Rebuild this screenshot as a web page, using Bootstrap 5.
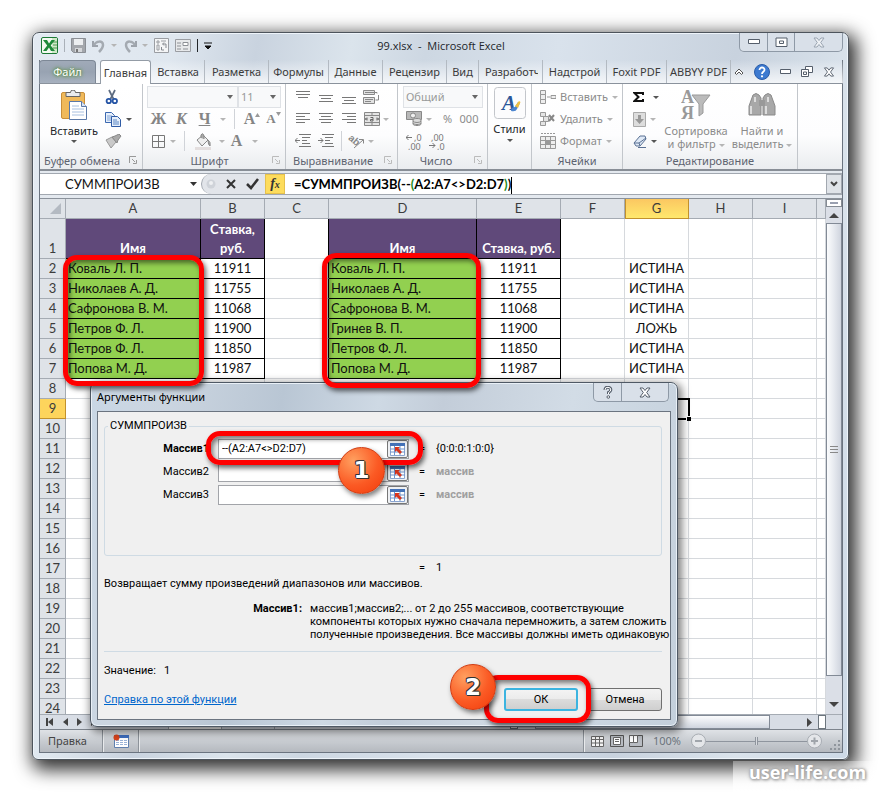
<!DOCTYPE html>
<html lang="ru">
<head>
<meta charset="utf-8">
<meta name="viewport" content="width=device-width, initial-scale=1">
<title>99.xlsx - Microsoft Excel</title>
<link href="https://cdn.jsdelivr.net/npm/bootstrap@5.3.0/dist/css/bootstrap.min.css" rel="stylesheet">
<style>
:root{--ui:"Noto Sans","Open Sans",sans-serif;--cell:Lato,"Open Sans",sans-serif;--dlg:Roboto,"Noto Sans",sans-serif}
body{font:11px/16px var(--ui);color:#3b3b3b;background:#fff;overflow:hidden}
button,select,input{font:inherit;color:inherit}
button{border:0;background:none;padding:0;white-space:nowrap}
svg{flex:none;display:block}
.stage{padding:32px 33px 0 32px}
.xl-window{border:1px solid #4d545c;border-radius:7px 7px 6px 6px;padding:0 5px 6px 6px;background:linear-gradient(100deg,#e3eaf2 0,#dfe7ef 15%,#c9d3df 24%,#dbe4ec 34%,#cdd7e2 42%,#d9e2ec 56%,#c8d2de 75%,#dae3ec 88%,#cdd9e6 100%);box-shadow:inset 0 0 0 1px #eef4fa,4px 6px 18px 4px rgba(0,0,0,.8)}
.client{border:1px solid #6b7480;border-top:0}
.titlebar{height:27px}
.app-title{font:12px/16px "Open Sans",sans-serif;font-size:11px}
.qat{gap:6px;padding:2px 0 0 2px}
.qat .hist{display:flex;align-items:center;gap:5px}
.vsep{width:1px;background:#a9b0b8;align-self:stretch;margin:2px 0}
.wbtns{height:19px;border:1px solid #8e99a6;border-top:0;border-radius:0 0 5px 5px;background:#d9e0e9}
.wbtns button{display:flex;align-items:center;justify-content:center;border-right:1px solid #8e99a6}
.wbtns button:last-child{border-right:0}
.tabs{height:24px;border-bottom:1px solid #8a929c;background:linear-gradient(rgba(255,255,255,0),rgba(255,255,255,.75));margin:0 -1px}
.tabs .rtab{height:23px;line-height:24px;overflow:hidden;text-align:center;border-right:1px solid #b3bac2;flex:none}
.tabs .t-file{background:linear-gradient(#a0aab8,#98a3b2 50%,#a7b1bf);border:1px solid #7d8896;border-bottom:0;border-radius:4px 4px 0 0;color:#fff;text-shadow:0 0 3px #48802a,0 0 4px #5c9a35;width:57px;line-height:22px}
.tabs .t-home{background:#fff;border:1px solid #949ca6;border-bottom:0;border-radius:3px 3px 0 0;height:24px;width:51px;line-height:22px;margin:0 1px 0 4px}
.tabs .corner{gap:10px;margin-right:8px}
.ribbon{height:87px;background:linear-gradient(#fff,#fdfdfe 60%,#eaecef);border-bottom:2px solid #888e96}
.grp{display:flex;flex-direction:column;border-right:1px solid #c2c6cb;flex:none}
.gbody{height:68px;padding-top:2px;display:flex}
.glabel{height:17px;line-height:17px;display:flex;align-items:center;color:#5d6370}
.r{height:22px;display:flex;align-items:center;color:#8b8b8b}
.r>*{flex:none}
.c{display:flex;align-items:center;justify-content:center}
.w8{width:8px}.w10{width:10px}.w16{width:16px}.w20{width:20px}.w23{width:23px}
.car{width:0;height:0;border:3px solid transparent;border-top-color:#b5b5b5;border-bottom:0;flex:none;display:block}
.car.dk{border-top-color:#555}
.gs{width:1px;height:20px;background:#d0d3d8}
.ser{font:bold 16px/20px "Liberation Serif",serif;color:#858585}
.rsel{appearance:none;height:22px;border:1px solid #dfe2e6;border-radius:0;background:#f8f9fa url("data:image/svg+xml,%3Csvg xmlns='http://www.w3.org/2000/svg' width='6' height='4'%3E%3Cpath d='M0 0h6L3 4z' fill='%23666'/%3E%3C/svg%3E") no-repeat right 4px center;padding:0 2px;color:#999}
.bigtxt{line-height:13px;padding-top:3px}
.fbar{height:27px;background:#e4e9ef;padding-top:2px}
.fin{height:22px;background:#fff;border:solid #a2a8b0;border-width:1px 0}
.namebox{width:145px;font:13px/20px var(--cell);color:#111;border:0;outline:0;background:#fff;padding:0 0 0 25px}
.nbtn{width:64px;background:#e2e5ea;border-radius:11px 0 0 11px;border-left:1px solid #a2a8b0;gap:10px;padding-left:4px}
.fx{width:20px;background:#fddc5c;border:1px solid #e6c14c;font:italic bold 14px/16px "Liberation Serif",serif;color:#333}
.formula{font:bold 13px/20px var(--cell);color:#000;padding-left:9px;white-space:nowrap;outline:0}
.formula .g{color:#1b8a1b}
.caret{display:inline-block;width:1px;height:17px;background:#000;vertical-align:middle}
.sheetwrap{border-top:1px solid #8b929b;height:516px}
.gridbox{flex:1;min-width:0;overflow:hidden;background:#fff}
.sheet{table-layout:fixed;border-collapse:separate;border-spacing:0;width:100%;font:13px/19px var(--cell);color:#111}
.sheet th,.sheet td{padding:0;height:20px;border-right:1px solid #d6d9dd;border-bottom:1px solid #d6d9dd;white-space:nowrap;overflow:hidden}
.sheet th{background:#dfe3e8;border-color:#a5abb3;font-weight:400;text-align:center;color:#3c3c3c}
.sheet thead th.on{background:linear-gradient(#fbc761,#ffe86d);border-color:#c2912c;box-shadow:inset 1px 0 #c2912c}
.sheet tbody th.on{background:#fdd45c;border-color:#c2912c}
.sheet tr.first td,.sheet tr.first th{height:40px;vertical-align:bottom}
.sheet td.hd{background:#60497a;color:#fff;font-weight:700;text-align:center;border-color:#000;white-space:normal}
.sheet td.nm{background:#92d050;border-color:#000;padding-left:2px}
.sheet td.nu{border-color:#000;text-align:center}
.sheet td.ce{text-align:center}
.sheet td.lb{border-right-color:#000}
.sheet td.cur{outline:2px solid #000;outline-offset:-1px;overflow:visible;position:relative}
.sheet td.cur::after{content:"";position:absolute;right:-3px;bottom:-3px;width:5px;height:5px;background:#000;border:solid #fff;border-width:1px 0 0 1px}
.vscroll{width:16px;background:#dbdfe7}
.split{height:8px;border:1px solid #858b93;background:#fff;padding:2px 3px}
.split i{display:block;height:2px;background:#9aa0b0}
.arr{height:16px}
.thumb{border:1px solid #828a96;background:linear-gradient(90deg,#fbfcfd,#e6e9ef 50%,#cfd4de);height:453px}
.vgap{height:20px}
.hrow{height:16px;background:#d8dde5;border-top:1px solid #a5abb3;border-bottom:1px solid #7d848d}
.hrow .st{width:53px;line-height:14px;color:#333;border-right:1px solid #9da3ab}
.hnav{width:60px;gap:9px;padding-left:6px}
.hthumb{width:235px;border:1px solid #828a96;background:linear-gradient(#fbfcfd,#e6e9ef 50%,#cfd4de)}
.status{height:22px;background:linear-gradient(#dfe2e6,#c8ccd1 50%,#b5b9bf);color:#444}
.status .ss{width:1px;background:#8d939a;border-right:1px solid #e8eaec;box-sizing:content-box;align-self:stretch}
.zoom{appearance:none;width:101px;height:16px;background:linear-gradient(#8f959e,#8f959e) center/100% 1px no-repeat;margin:0}
.zoom::-webkit-slider-thumb{appearance:none;width:3px;height:8px;background:#d8dbdf;border-left:1px solid #8f959e;border-right:1px solid #8f959e}
.dlg{position:absolute;left:90px;top:382px;width:588px;border:1px solid #4f5965;border-radius:7px;padding:0 6px 6px;background:linear-gradient(100deg,#c9d7e5 0,#cbd5e0 12%,#b9c6d4 30%,#ced9e4 45%,#c3cdd9 55%,#d2dce6 75%,#c3cfdb 100%);box-shadow:inset 0 0 0 1px #e9f0f7,2px 3px 9px 2px rgba(0,0,0,.5);font:11px/14px var(--dlg);color:#000}
.dtitle{height:28px;font:11px/28px var(--ui)}
.dbtns{height:19px;margin-right:2px;width:76px}
.panel{border:1px solid #6b7480;background:#f0f0f0;padding:7px 8px 8px 6px}
.panel fieldset{border:1px solid #cfdbe4;border-radius:3px;height:137px}
.panel legend{float:none;width:auto;font:inherit;margin:0 0 6px 3px;padding:0 2px}
.arg{height:20px;margin-bottom:3px}
.arg label{width:104px;text-align:right;margin-right:9px}
.field{width:191px;height:20px;border:1px solid #a2a4a9;background:#fff}
.field input{border:0;outline:0;background:none;flex:1;min-width:0;padding:0 3px}
.field button{width:21px;border:1px solid #777;border-radius:2px;background:#eef0f3;display:flex;align-items:center;justify-content:center}
.eq{width:17px;margin-left:10px}
.result{padding:5px 0 0 305px}
.about{margin-top:2px}
.argdoc{line-height:13px;margin-top:11px;white-space:nowrap}
.argdoc b{width:198px;margin-right:8px}
.rule{border-top:1px solid #cfdbe4;margin-top:10px}
.val{margin-top:12px}
.foot{gap:10px;margin-top:10px}
.mute{color:#a0a0a0;font-weight:700}
.help-link{color:#0066cc;text-decoration:underline}
.wb{width:74px;height:23px;border:1px solid #707070;border-radius:3px;background:linear-gradient(#f3f3f3,#ebebeb 50%,#dcdcdc 50%,#cfcfcf);text-align:center}
.wb.def{border:2px solid #3cb4e0}
.ring{position:absolute;border:5px solid #f00;border-radius:14px;box-shadow:2px 3px 5px rgba(0,0,0,.6),inset 2px 3px 5px rgba(0,0,0,.5);pointer-events:none}
.r1{left:63px;top:255px;width:141px;height:131px}
.r2{left:322px;top:253px;width:159px;height:135px}
.r3{left:206px;top:431px;width:217px;height:34px}
.r4{left:484px;top:675px;width:107px;height:48px}
.ball{position:absolute;width:47px;height:47px;border-radius:50%;border:1px solid #d03a10;background:radial-gradient(circle at 32% 28%,#ffa060,#fb5a24 55%,#f23a0a);box-shadow:2px 3px 5px rgba(0,0,0,.5);color:#fff;font:bold 23px/45px "DejaVu Sans",sans-serif;text-align:center;text-shadow:1px 0 #333,-1px 0 #333,0 1px #333,0 -1px #333,1px 1px #333,-1px -1px #333}
.b1{left:338px;top:447px}.b2{left:450px;top:664px;width:46px;height:46px}
.wm{width:149px;height:31px;margin:1px -33px 0 auto;position:relative;background:linear-gradient(rgba(255,255,255,.35),rgba(255,255,255,.85));font:bold 18px/22px "Open Sans",sans-serif;color:#fff;text-shadow:0 0 2px #999,0 0 4px #aaa,1px 1px 3px #999;text-align:center}
</style>
</head>
<body>
<div class="stage position-relative">
<div class="xl-window">
 <header class="titlebar d-flex position-relative align-items-start">
  <div class="qat d-flex align-items-center pt-1">
   <svg width="17" height="17" viewBox="0 0 17 17"><rect x=".5" y=".5" width="16" height="16" rx="1.5" fill="#f4faf2" stroke="#1d7a35"/><path d="M11 1h5v15h-5z" fill="#cfe8c8"/><path d="M12 5h4M12 8h4M12 11h4" stroke="#4d9a4e"/><path d="M2 3h4l2 3.5L10.500 3H14L9.700 8.500 14 14h-4L8 10.500 5.500 14H2l4.200-5.500z" fill="#1f8a3a"/></svg>
   <span class="vsep"></span>
   <button aria-label="Сохранить"><svg width="15" height="15" viewBox="0 0 15 15"><path d="M.5.5h14v14h-12l-2-2z" fill="#a4a7ac" stroke="#8b8f95"/><path d="M3 1h9v6H3z" fill="#eceef0"/><path d="M4 10h7v4H4z" fill="#d5d7da"/><path d="M5 11h2v3H5z" fill="#777"/></svg></button>
   <button aria-label="Отменить" class="hist"><svg width="14" height="14" viewBox="0 0 14 14"><path d="M1 2v5h5" fill="none" stroke="#9da3ab" stroke-width="2"/><path d="M2 6C4 2 11 1 11 6c0 3-2 5-4 7" fill="none" stroke="#a4aab1" stroke-width="2.500"/></svg><i class="car"></i></button>
   <button aria-label="Вернуть" class="hist"><svg width="14" height="14" viewBox="0 0 14 14"><path d="M13 2v5H8" fill="none" stroke="#9da3ab" stroke-width="2"/><path d="M12 6C10 2 3 1 3 6c0 3 2 5 4 7" fill="none" stroke="#a4aab1" stroke-width="2.500"/></svg><i class="car"></i></button>
   <button aria-label="Сводная таблица"><svg width="15" height="15" viewBox="0 0 15 15"><path d="M.5.5h14v14H.5z" fill="#f4f5f6" stroke="#9a9da2"/><path d="M3 3h2v2H3zM3 7h2v5H3zM7 3h5" fill="none" stroke="#9a9da2"/><path d="M7.500 9v3H10M12 10V6H9M10 4.500L8.500 6 10 7.500" fill="none" stroke="#85898f"/></svg></button>
   <button aria-label="Форма"><svg width="16" height="15" viewBox="0 0 16 15"><path d="M.5 1.500h15v12H.5z" fill="#e7e9eb" stroke="#9a9da2"/><path d="M2 5h4M2 8h4M2 11h4M8 11h5" stroke="#8d9196"/><path d="M8 4.500h5v3H8z" fill="#fff" stroke="#8d9196"/></svg></button>
   <span class="vsep bg-dark"></span>
   <button aria-label="Настройка панели"><svg width="8" height="8" viewBox="0 0 8 8"><path d="M0 1h8M1 4h6L4 7z" fill="#111" stroke="#111"/></svg></button>
  </div>
  <h1 class="app-title position-absolute start-50 top-0 translate-middle-x m-0 text-nowrap text-dark" style="padding-top:5px">99.xlsx&nbsp; - &nbsp;Microsoft Excel</h1>
  <div class="wbtns d-flex ms-auto">
   <button style="width:28px" aria-label="Свернуть"><svg width="12" height="6"><path d="M.5.5h11v4H.5z" fill="#fff" stroke="#555e6b"/></svg></button>
   <button style="width:27px" aria-label="Восстановить"><svg width="13" height="11"><path d="M1 1h11v8.500H1zM4.500 4h4v2.500h-4z" fill="#fff" stroke="#555e6b"/></svg></button>
   <button style="width:47px" aria-label="Закрыть"><svg width="12" height="11" viewBox="0 0 12 11"><path d="M1 1h3l2 2.500L8 1h3L7.700 5.500 11 10H8L6 7.500 4 10H1l3.300-4.500z" fill="#eef1f5" stroke="#9aa4b1"/></svg></button>
  </div>
 </header>
 <div class="client">
  <nav class="tabs d-flex position-relative" role="tablist">
   <button class="rtab t-file" role="tab">Файл</button>
   <button class="rtab t-home" role="tab">Главная</button>
   <button class="rtab" style="width:53px" role="tab">Вставка</button>
   <button class="rtab" style="width:64px" role="tab">Разметка</button>
   <button class="rtab" style="width:60px" role="tab">Формулы</button>
   <button class="rtab" style="width:54px" role="tab">Данные</button>
   <button class="rtab" style="width:64px" role="tab">Рецензир</button>
   <button class="rtab" style="width:32px" role="tab">Вид</button>
   <button class="rtab text-start" style="width:64px;padding-left:6px" role="tab"><span class="d-block overflow-hidden" style="width:53px">Разработчик</span></button>
   <button class="rtab" style="width:64px" role="tab">Надстрой</button>
   <button class="rtab" style="width:60px" role="tab">Foxit PDF</button>
   <button class="rtab" style="width:64px" role="tab">ABBYY PDF</button>
   <div class="corner d-flex align-items-center ms-auto">
    <button aria-label="Свернуть ленту"><svg width="10" height="8" viewBox="0 0 10 8"><path d="M1 5L5 1l4 4-1.500 1.500L5 4 2.500 6.500z" fill="#fff" stroke="#555"/></svg></button>
    <button aria-label="Справка"><svg width="16" height="16" viewBox="0 0 16 16"><circle cx="8" cy="8" r="7.500" fill="#3d7ad0" stroke="#2a5ca8"/><path d="M5.500 6c0-3.500 5.200-3.200 5 0C10.300 8 8 7.500 8 10" fill="none" stroke="#fff" stroke-width="1.800"/><circle cx="8" cy="12.300" r="1.100" fill="#fff"/></svg></button>
    <button aria-label="Свернуть книгу"><svg width="11" height="5"><path d="M.5.5h10v4H.5z" fill="#fff" stroke="#555e6b"/></svg></button>
    <button aria-label="Восстановить книгу"><svg width="12" height="11" viewBox="0 0 12 11"><path d="M4.500.5h7v6h-7z" fill="#fff" stroke="#555e6b"/><path d="M.5 3.500h7v7h-7zM2.500 6h3v2.500h-3z" fill="#fff" stroke="#555e6b"/></svg></button>
    <button aria-label="Закрыть книгу"><svg width="12" height="10" viewBox="0 0 12 11"><path d="M1 1h3l2 2.500L8 1h3L7.700 5.500 11 10H8L6 7.500 4 10H1l3.300-4.500z" fill="#fff" stroke="#555e6b"/></svg></button>
   </div>
  </nav>
  <section class="ribbon d-flex overflow-hidden">
   <div class="grp" style="width:103px"><div class="gbody">
     <button class="d-flex flex-column align-items-center text-dark pt-1" style="width:62px;margin-left:3px">
      <svg width="28" height="31" viewBox="0 0 28 31"><rect x="1.500" y="2.500" width="23" height="26" rx="1.500" fill="#f0b95a" stroke="#c98f3a"/><path d="M6 2.500h4.500a2.500 2.500 0 0 1 5 0H20v4H6z" fill="#e9ebee" stroke="#666"/><path d="M9.500 11.500h12l5 5v13h-17z" fill="#fff" stroke="#5b79a8"/><path d="M21.500 11.500v5h5" fill="#d9e4f4" stroke="#5b79a8"/><path d="M12 16h7M12 19h12M12 22h12M12 25h12" stroke="#a8c0e0"/></svg>
      <span style="line-height:19px">Вставить</span><i class="car dk"></i></button>
     <div><div class="r"><button aria-label="Вырезать"><svg width="14" height="16" viewBox="0 0 14 16"><path d="M4 1l4.500 9M10 1L5.500 10" stroke="#5d6b80" stroke-width="1.700"/><circle cx="3.800" cy="12" r="2.200" fill="none" stroke="#2554a5" stroke-width="1.800"/><circle cx="9.800" cy="12" r="2.200" fill="none" stroke="#2554a5" stroke-width="1.800"/></svg></button></div>
      <div class="r"><button class="d-flex align-items-center gap-1" aria-label="Копировать"><svg width="17" height="15" viewBox="0 0 17 15"><path d="M.5.5h6l3 3v7h-9z" fill="#e6effb" stroke="#3c68b0"/><path d="M2 4h5M2 6h6M2 8h6" stroke="#7ea2d6"/><path d="M6.500 4.500h6l3 3v7h-9z" fill="#e6effb" stroke="#2f5ba5"/><path d="M8 8h4M8 10h6M8 12h6" stroke="#5b86c4"/></svg><i class="car dk"></i></button></div>
      <div class="r"><button aria-label="Формат по образцу"><svg width="17" height="15" viewBox="0 0 17 15"><path d="M1 6l6-3 4 5-5 6z" fill="#c9c9c9" stroke="#999"/><path d="M7 3l3-1 4-2 2 2-3 4-1 3z" fill="#aaa" stroke="#888"/></svg></button></div></div>
    </div><div class="glabel ps-1">Буфер обмена<svg class="ms-auto me-1" width="9" height="9" viewBox="0 0 9 9"><path d="M.5 7V.5H7M3 3l3 3M7.500 4v3.500H4" fill="none" stroke="#999"/></svg></div></div>

   <div class="grp" style="width:143px"><div class="gbody flex-column ps-1">
     <div class="r"><select class="rsel" style="width:91px" aria-label="Шрифт"><option></option></select><select class="rsel" style="width:43px" aria-label="Размер"><option>11</option></select></div>
     <div class="r"><button class="c w23 ser">Ж</button><button class="c w23 ser fst-italic">К</button><button class="c w23 ser text-decoration-underline">Ч</button><i class="car ms-1"></i><span class="c w16"><i class="gs"></i></span><button class="c w20 ser">A<svg width="5" height="12"><path d="M0 4h5L2.500 0z" fill="#999"/></svg></button><button class="c w23 ser" style="font-size:13px">A<svg width="5" height="14"><path d="M0 0h5L2.500 4z" fill="#999"/></svg></button></div>
     <div class="r"><button class="c w23" aria-label="Границы"><svg width="13" height="13"><path d="M.5.5h12v12H.5zM6.500 0v13M0 6.500h13" fill="none" stroke="#777"/></svg></button><i class="car"></i><span class="c w16"><i class="gs"></i></span><button class="c w23" aria-label="Заливка"><svg width="17" height="17" viewBox="0 0 17 17"><path d="M2 7l6-5 5 5-6 6z" fill="#eee" stroke="#888"/><path d="M6 5V2q2-3 3 1v3M13 7q3 2 2 6-2-1-2-6" fill="#aaa" stroke="#888"/><path d="M0 14h16v3H0z" fill="#e3dede"/></svg></button><i class="car ms-1"></i><button class="c w23 ser">A</button><i class="car ms-1"></i></div>
    </div><div class="glabel"><span class="mx-auto ps-1">Шрифт</span><svg class="me-1" width="9" height="9" viewBox="0 0 9 9"><path d="M.5 7V.5H7M3 3l3 3M7.500 4v3.500H4" fill="none" stroke="#bbb"/></svg></div></div>

   <div class="grp" style="width:112px"><div class="gbody flex-column" style="padding-left:5px">
     <div class="r"><button class="c w23" aria-label="По верху"><svg width="14" height="16"><path d="M0 2.500h14M0 5.500h14M2 8.500h10" stroke="#777"/></svg></button><button class="c w23" aria-label="Посередине"><svg width="14" height="16"><path d="M0 6.500h14M2 9.500h10M0 12.500h14" stroke="#777"/></svg></button><button class="c w23" aria-label="По низу"><svg width="14" height="16"><path d="M0 8.500h14M2 11.500h10M0 14.500h14" stroke="#777"/></svg></button><button class="c w23" aria-label="Перенос"><svg width="17" height="15" viewBox="0 0 17 15"><path d="M.5.5h11v4H.5zM.5 7.500h11v6H.5z" fill="#e2e2e2" stroke="#888"/><path d="M2 2.500h12v1M2 9.500h8M2 11.500h6M15.500 5v5h-3" fill="none" stroke="#888"/></svg></button></div>
     <div class="r"><button class="c w23" aria-label="Слева"><svg width="14" height="12"><path d="M0 .5h14M0 3.500h9M0 6.500h14M0 9.500h9" stroke="#777"/></svg></button><button class="c w23" aria-label="По центру"><svg width="14" height="12"><path d="M0 .5h14M2 3.500h10M0 6.500h14M2 9.500h10" stroke="#777"/></svg></button><button class="c w23" aria-label="Справа"><svg width="14" height="12"><path d="M0 .5h14M5 3.500h9M0 6.500h14M5 9.500h9" stroke="#777"/></svg></button><button class="c w23" aria-label="Объединить"><svg width="16" height="14" viewBox="0 0 16 14"><path d="M.5.500h15v13H.5zM0 3.500h16M0 10.500h16M8 0v3M8 11v3" fill="#e4e4e4" stroke="#888"/><path d="M1 7h3M12 7h3M3 5.500L1.500 7 3 8.500M13 5.500L14.500 7 13 8.500M6.500 5.500h2.500v3.500H6.500V7.500H9" fill="none" stroke="#666"/></svg></button><i class="car"></i></div>
     <div class="r"><button class="c w23" aria-label="Уменьшить отступ"><svg width="16" height="14"><path d="M4 .5h12M7 3.500h8M7 6.500h5M7 9.500h8M4 12.500h12M0 6.500h5M2.500 4L0 6.500 2.500 9" fill="none" stroke="#777"/></svg></button><button class="c w23" aria-label="Увеличить отступ"><svg width="16" height="14"><path d="M4 .5h12M7 3.500h8M7 6.500h5M7 9.500h8M4 12.500h12M0 6.500h5M2.500 4L5 6.500 2.500 9" fill="none" stroke="#777"/></svg></button><span class="c w8"><i class="gs"></i></span><button class="c w23" aria-label="Ориентация"><svg width="17" height="15" viewBox="0 0 17 15"><text x="0" y="8" transform="rotate(40 4 6)" font-family="Liberation Sans" font-size="10" font-weight="bold" fill="#888">ab</text><path d="M6 14l9-8M11 5.500h4.500v4" fill="none" stroke="#888"/></svg></button><i class="car"></i></div>
    </div><div class="glabel" style="padding-left:7px">Выравнивание<svg class="ms-auto me-1" width="9" height="9" viewBox="0 0 9 9"><path d="M.5 7V.5H7M3 3l3 3M7.500 4v3.500H4" fill="none" stroke="#bbb"/></svg></div></div>

   <div class="grp" style="width:90px"><div class="gbody flex-column" style="padding-left:5px">
     <div class="r"><select class="rsel" style="width:80px" aria-label="Формат числа"><option>Общий</option></select></div>
     <div class="r"><button class="c w23" aria-label="Денежный"><svg width="17" height="16" viewBox="0 0 17 16"><path d="M.5.500h15v8H.5z" fill="#b8b8b8" stroke="#888"/><circle cx="7" cy="4.500" r="2.500" fill="#eee" stroke="#888"/><path d="M7 9c0-2 8-2 8 0v4c0 2-8 2-8 0z" fill="#ddd" stroke="#888"/><path d="M7 10c1 2 7 2 8 0M7 12c1 2 7 2 8 0" fill="none" stroke="#888"/></svg></button><i class="car"></i><button class="c w23 ms-1">%</button><button class="c w20">000</button></div>
     <div class="r"><button class="c w23" aria-label="Увеличить разрядность"><svg width="17" height="17" font-family="Noto Sans" font-size="9" fill="#777"><path d="M0 4.500h6M2.500 2L0 4.500 2.500 7" fill="none" stroke="#777"/><text x="8" y="8">,0</text><text x="2" y="17">,00</text></svg></button><button class="c w23" aria-label="Уменьшить разрядность"><svg width="17" height="17" font-family="Noto Sans" font-size="9" fill="#777"><path d="M0 12.500h6M3.500 10L6 12.500 3.500 15" fill="none" stroke="#777"/><text x="2" y="8">,00</text><text x="8" y="17">,0</text></svg></button></div>
    </div><div class="glabel"><span class="mx-auto">Число</span><svg class="me-1" width="9" height="9" viewBox="0 0 9 9"><path d="M.5 7V.5H7M3 3l3 3M7.500 4v3.500H4" fill="none" stroke="#bbb"/></svg></div></div>

   <div class="grp" style="width:44px"><button class="d-flex flex-column align-items-center text-dark" style="padding-top:3px">
      <svg width="32" height="32" viewBox="0 0 32 32"><rect x=".5" y=".5" width="31" height="31" rx="3" fill="#fcfcfd" stroke="#c3c6cb"/><text x="8" y="23" font-family="Liberation Serif" font-style="italic" font-weight="bold" font-size="21" fill="#2a5699">A</text><path d="M17 24q0-4 4-4l3-5 2 1-3 6q-1 3-6 2z" fill="#4c85cf"/><path d="M21 19l4-5 1.500 1L24 21z" fill="#f0c040"/></svg>
      <span style="line-height:20px">Стили</span><i class="car dk"></i></button></div>

   <div class="grp" style="width:91px"><div class="gbody flex-column" style="padding-left:8px">
     <button class="r"><svg width="16" height="15"><path d="M.5.500h5v4h-5zM.5 9.500h5v4h-5zM.5 4.500h5v5h-5zM11 5.500h5v3h-5z" fill="#eee" stroke="#999"/><path d="M7 7h3" stroke="#999"/></svg><span class="ms-1 me-1 text-nowrap">Вставить</span><i class="car"></i></button>
     <button class="r"><svg width="16" height="15"><path d="M.5.500h5v4h-5zM.5 9.500h5v4h-5zM3.500 4.500h5v5h-5z" fill="#e4e4e4" stroke="#999"/><path d="M9 3l5 6M14 3L9 9" stroke="#888" stroke-width="2"/></svg><span class="ms-1 me-1">Удалить</span><i class="car"></i></button>
     <button class="r"><svg width="16" height="16"><path d="M.5 3.500h15v12H.5zM5.500 3v13M10.500 3v13M0 7.500h16M0 11.500h16" fill="#eee" stroke="#999"/><path d="M5.500 7.500h5v4h-5z" fill="#999"/><path d="M1 .5h14" stroke="#999" stroke-dasharray="2 1"/></svg><span class="ms-1 me-1">Формат</span><i class="car"></i></button>
    </div><div class="glabel justify-content-center">Ячейки</div></div>

   <div class="grp" style="width:175px"><div class="gbody">
     <div style="width:38px;padding-left:10px">
      <button class="r gap-2" aria-label="Сумма"><svg width="12" height="10" viewBox="0 0 12 10"><path d="M10 3V1H1.500l4 4-4 4H10V7" fill="none" stroke="#111" stroke-width="2"/></svg><i class="car dk"></i></button>
      <button class="r gap-1" aria-label="Заполнить"><svg width="13" height="15"><path d="M.5.500h12v14H.5z" fill="#ddd" stroke="#aaa"/><path d="M5 3h3v4h3l-4.500 5L2 7h3z" fill="#999"/></svg><i class="car"></i></button>
      <button class="r gap-1" aria-label="Очистить"><svg width="14" height="13" viewBox="0 0 14 13"><path d="M1 8l6-7h5l1 3-6 7H3z" fill="#dfe9f6" stroke="#5a7193"/><path d="M1 8l5 0 7-5M6 8l1 3M5 12.500h8" fill="none" stroke="#5a7193"/></svg><i class="car dk"></i></button></div>
     <button class="d-flex flex-column align-items-center" style="width:70px;color:#8b8b8b;padding-top:3px"><svg width="30" height="32" viewBox="0 0 30 32"><text x="0" y="14" font-family="Liberation Serif" font-weight="bold" font-size="18" fill="#999">A</text><text x="0" y="30" font-family="Liberation Serif" font-weight="bold" font-size="18" fill="#999">Я</text><path d="M11 6h18l-7 9v9l-4 3V15z" fill="#bbb" stroke="#999"/></svg><span class="bigtxt">Сортировка<br>и фильтр <i class="car d-inline-block align-middle"></i></span></button>
     <button class="d-flex flex-column align-items-center" style="width:62px;color:#8b8b8b;padding-top:3px"><svg width="28" height="32" viewBox="0 0 28 32"><path d="M5 6q3-3 6 0l2 3v17H1V17zM23 6q-3-3-6 0l-2 3v17h12V17z" fill="#a8a8a8" stroke="#8a8a8a"/><path d="M11 11h6v6h-6z" fill="#999"/><path d="M3 17v8M18 17v8M7 8v5M20 8v5" stroke="#ddd" stroke-width="2"/></svg><span class="bigtxt">Найти и<br>выделить <i class="car d-inline-block align-middle"></i></span></button>
    </div><div class="glabel justify-content-center">Редактирование</div></div>
  </section>

  <div class="fbar"><div class="fin d-flex">
   <input class="namebox" value="СУММПРОИЗВ" aria-label="Имя">
   <button class="c w16" aria-label="Список имён"><svg width="7" height="4"><path d="M0 0h7L3.500 4z" fill="#333"/></svg></button>
   <div class="nbtn d-flex align-items-center">
    <svg width="10" height="10"><circle cx="5" cy="5" r="4.500" fill="#cfd3d9"/><circle cx="5" cy="4" r="2" fill="#eef0f2"/></svg>
    <button aria-label="Отмена ввода"><svg width="10" height="10"><path d="M1 1l8 8M9 1L1 9" stroke="#333" stroke-width="2"/></svg></button>
    <button aria-label="Ввод"><svg width="13" height="12"><path d="M1 6l4 4L12 1" fill="none" stroke="#333" stroke-width="2.500"/></svg></button>
   </div>
   <button class="fx" aria-label="Вставить функцию">f<small style="font-size:10px">x</small></button>
   <div class="formula flex-grow-1" contenteditable="true" role="textbox" aria-label="Строка формул">=СУММПРОИЗВ(--<span class="g">(</span>A2:A7&lt;&gt;D2:D7<span class="g">)</span>)<span class="caret"></span></div>
   <button class="c w16" style="background:#dfe3e8;border:1px solid #a2a8b0" aria-label="Развернуть"><svg width="8" height="6"><path d="M1 1l3 3 3-3" fill="none" stroke="#444" stroke-width="2"/></svg></button>
  </div></div>

  <div class="sheetwrap d-flex">
   <div class="gridbox">
    <table class="sheet m-0">
     <colgroup><col style="width:26px"><col style="width:135px"><col style="width:64px"><col style="width:64px"><col style="width:148px"><col style="width:84px"><col style="width:64px"><col style="width:64px"><col style="width:64px"><col style="width:64px"><col></colgroup>
     <thead><tr><th><svg class="ms-auto me-1" width="11" height="11"><path d="M11 0v11H0z" fill="#b4bac2"/></svg></th><th>A</th><th>B</th><th>C</th><th>D</th><th>E</th><th>F</th><th class="on">G</th><th>H</th><th>I</th><th></th></tr></thead>
     <tbody id="rows">
      <tr class="first"><th>1</th><td class="hd">Имя</td><td class="hd">Ставка, руб.</td><td class="lb"></td><td class="hd">Имя</td><td class="hd">Ставка, руб.</td><td></td><td></td><td></td><td></td><td></td></tr>
     </tbody>
    </table>
   </div>
   <div class="vscroll">
    <div class="split"><i></i></div>
    <button class="c arr w-100" aria-label="Вверх"><svg width="10" height="5"><path d="M0 5h10L5 0z" fill="#444"/></svg></button>
    <div class="thumb c"><svg width="8" height="8"><path d="M0 .5h8M0 3.500h8M0 6.500h8" stroke="#888"/></svg></div>
    <div class="vgap"></div>
    <button class="c arr w-100" aria-label="Вниз"><svg width="10" height="5"><path d="M0 0h10L5 5z" fill="#444"/></svg></button>
   </div>
  </div>
  <div class="hrow d-flex">
   <div class="hnav d-flex align-items-center"><svg width="8" height="8"><path d="M1 0v8" stroke="#444" stroke-width="2"/><path d="M7 0v8L2 4z" fill="#444"/></svg><svg width="5" height="8"><path d="M5 0v8L0 4z" fill="#444"/></svg><svg width="5" height="8"><path d="M0 0v8l5-4z" fill="#444"/></svg><svg width="8" height="8"><path d="M0 0v8l5-4zM6 0h2v8H6z" fill="#444"/></svg></div>
   <button class="st ms-3">Лист3</button><button class="st fw-bold bg-white">Лист2</button><button class="st">Лист1</button>
   <div class="ms-auto d-flex"><span class="border border-secondary bg-white" style="width:8px;margin-right:17px"></span><span class="hthumb"></span><button class="c" style="width:48px;padding-left:30px" aria-label="Вправо"><svg width="5" height="9"><path d="M0 0v9l5-4.500z" fill="#444"/></svg></button><span class="border border-secondary bg-white" style="width:8px"></span><span class="w16"></span></div>
  </div>
  <footer class="status d-flex align-items-center">
   <span style="width:62px;padding-left:8px">Правка</span><span class="ss"></span>
   <button class="c" style="width:34px" aria-label="Запись макроса"><svg width="16" height="14" viewBox="0 0 16 14"><path d="M1.500 1.500h14v12h-14z" fill="#fff" stroke="#5f7fae"/><path d="M1 1h15v3H1z" fill="#3f6fc0"/><path d="M3 6.500h11M3 8.500h11M3 10.500h11" stroke="#9ab3d8" stroke-dasharray="3 1"/><circle cx="3.500" cy="3.500" r="3" fill="#d8431c"/></svg></button><span class="ss"></span>
   <div class="d-flex align-items-center ms-auto h-100"><span class="ss"></span>
    <button style="margin-left:6px" aria-label="Обычный"><svg width="14" height="11"><path d="M.5.500h12v10H.5zM4.500 0v11M8.500 0v11M0 3.500h13M0 7h13" fill="#f4f4f4" stroke="#666"/></svg></button>
    <button style="margin-left:5px" aria-label="Разметка страницы"><svg width="14" height="12"><path d="M.5.500h13v11H.5z" fill="#b8bcc2" stroke="#555"/><path d="M3.500 2.500h7v7h-7zM5 4.500h4M5 6.500h4" fill="#fff" stroke="#666"/></svg></button>
    <button style="margin-left:5px" aria-label="Страничный"><svg width="14" height="12"><path d="M.5.500h13v11H.5z" fill="#b8bcc2" stroke="#555"/><path d="M.5.500h4v7h-4zM4.500.5h4v7h-4z" fill="#fff" stroke="#666"/></svg></button>
    <button class="text-secondary" style="width:48px">100%</button>
    <button aria-label="Уменьшить"><svg width="15" height="16"><circle cx="7.500" cy="8" r="7" fill="#e4e6e9" stroke="#a8adb3"/><path d="M4 8h7" stroke="#a0a5ab" stroke-width="2"/></svg></button>
    <input class="zoom" type="range" aria-label="Масштаб">
    <button aria-label="Увеличить"><svg width="15" height="16"><circle cx="7.500" cy="8" r="7" fill="#e4e6e9" stroke="#a8adb3"/><path d="M4 8h7M7.500 4.500v7" stroke="#a0a5ab" stroke-width="2"/></svg></button>
    <svg class="align-self-end ms-2" width="12" height="12" fill="#8f959c"><path d="M8 0h2v2H8zM4 4h2v2H4zM8 4h2v2H8zM0 8h2v2H0zM4 8h2v2H4zM8 8h2v2H8z"/></svg>
   </div>
  </footer>
 </div>
</div>
<div class="wm">user-life.com</div>

<section class="dlg" role="dialog" aria-labelledby="dt">
 <div class="d-flex justify-content-between align-items-start"><div class="dtitle" id="dt">Аргументы функции</div>
  <div class="wbtns dbtns d-flex"><button style="width:28px" aria-label="Справка"><svg width="10" height="13" viewBox="0 0 10 13"><path d="M2 4q0-3 3-2.700Q8 1.500 7.800 4 7.500 5.500 5.500 6.500V8" fill="none" stroke="#555e6b" stroke-width="3"/><path d="M2 4q0-3 3-2.700Q8 1.500 7.800 4 7.500 5.500 5.500 6.500V8" fill="none" stroke="#fff"/><circle cx="5.300" cy="11" r="1.300" fill="#fff" stroke="#555e6b"/></svg></button>
  <button class="flex-grow-1" aria-label="Закрыть"><svg width="12" height="11" viewBox="0 0 12 11"><path d="M1 1h3l2 2.500L8 1h3L7.700 5.500 11 10H8L6 7.500 4 10H1l3.300-4.500z" fill="#fff" stroke="#555e6b"/></svg></button></div></div>
 <div class="panel">
  <fieldset><legend>СУММПРОИЗВ</legend>
   <div class="arg d-flex align-items-center"><label class="fw-bold" for="m1">Массив1</label><div class="field d-flex"><input id="m1" value="--(A2:A7&lt;&gt;D2:D7)"><button aria-label="Выбрать диапазон"><svg width="15" height="13"><use href="#ref"/></svg></button></div><span class="eq">=</span>{0:0:0:1:0:0}</div>
   <div class="arg d-flex align-items-center"><label for="m2">Массив2</label><div class="field d-flex"><input id="m2"><button aria-label="Выбрать диапазон"><svg width="15" height="13"><use href="#ref"/></svg></button></div><span class="eq">=</span><span class="mute">массив</span></div>
   <div class="arg d-flex align-items-center"><label for="m3">Массив3</label><div class="field d-flex"><input id="m3"><button aria-label="Выбрать диапазон"><svg width="15" height="13"><use href="#ref"/></svg></button></div><span class="eq">=</span><span class="mute">массив</span></div>
  </fieldset>
  <div class="result d-flex"><span class="eq">=</span>1</div>
  <div class="about">Возвращает сумму произведений диапазонов или массивов.</div>
  <div class="argdoc d-flex"><b class="text-end flex-shrink-0">Массив1:</b><span>массив1;массив2;... от 2 до 255 массивов, соответствующие<br>компоненты которых нужно сначала перемножить, а затем сложить<br>полученные произведения. Все массивы должны иметь одинаковую</span></div>
  <div class="rule"></div>
  <div class="val">Значение: &nbsp; 1</div>
  <div class="foot d-flex align-items-center"><a class="help-link me-auto" href="#">Справка по этой функции</a><button class="wb def">ОК</button><button class="wb">Отмена</button></div>
 </div>
</section>

<div class="ring r1"></div><div class="ring r2"></div><div class="ring r3"></div><div class="ring r4"></div>
<div class="ball b1">1</div><div class="ball b2">2</div>
</div>
<svg width="0" height="0" class="position-absolute"><defs><g id="ref"><path d="M.5.500h14v12H.5z" fill="#fff" stroke="#8aa4cf"/><path d="M0 0h15v3H0z" fill="#4472b8"/><path d="M0 6h15M0 9h15M4.500 3v9M10 3v9" stroke="#6f93cc"/><path d="M5 4l5 0-1.500 1.500L12 9l-2 2-3.500-3.500L5 9z" fill="#d8341c"/></g></defs></svg>
<script>
const left=["Коваль Л. П.","Николаев А. Д.","Сафронова В. М.","Петров Ф. Л.","Петров Ф. Л.","Попова М. Д."];
const right=["Коваль Л. П.","Николаев А. Д.","Сафронова В. М.","Гринев В. П.","Петров Ф. Л.","Попова М. Д."];
const pay=[11911,11755,11068,11900,11850,11987];
let html="";
for(let n=2;n<=24;n++){
  const i=n-2;
  if(i<6){
    const res=left[i]===right[i]?"ИСТИНА":"ЛОЖЬ";
    html+=`<tr><th>${n}</th><td class="nm">${left[i]}</td><td class="nu">${pay[i]}</td><td class="lb"></td><td class="nm">${right[i]}</td><td class="nu">${pay[i]}</td><td></td><td class="ce">${res}</td><td></td><td></td><td></td></tr>`;
  }else{
    html+=`<tr><th class="${n===9?"on":""}">${n}</th>`;
    for(let c=1;c<=10;c++)html+=`<td class="${n===9&&c===7?"cur":""}"></td>`;
    html+="</tr>";
  }
}
document.getElementById("rows").insertAdjacentHTML("beforeend",html);
</script>
<script src="https://cdn.jsdelivr.net/npm/bootstrap@5.3.0/dist/js/bootstrap.bundle.min.js"></script>
</body>
</html>
